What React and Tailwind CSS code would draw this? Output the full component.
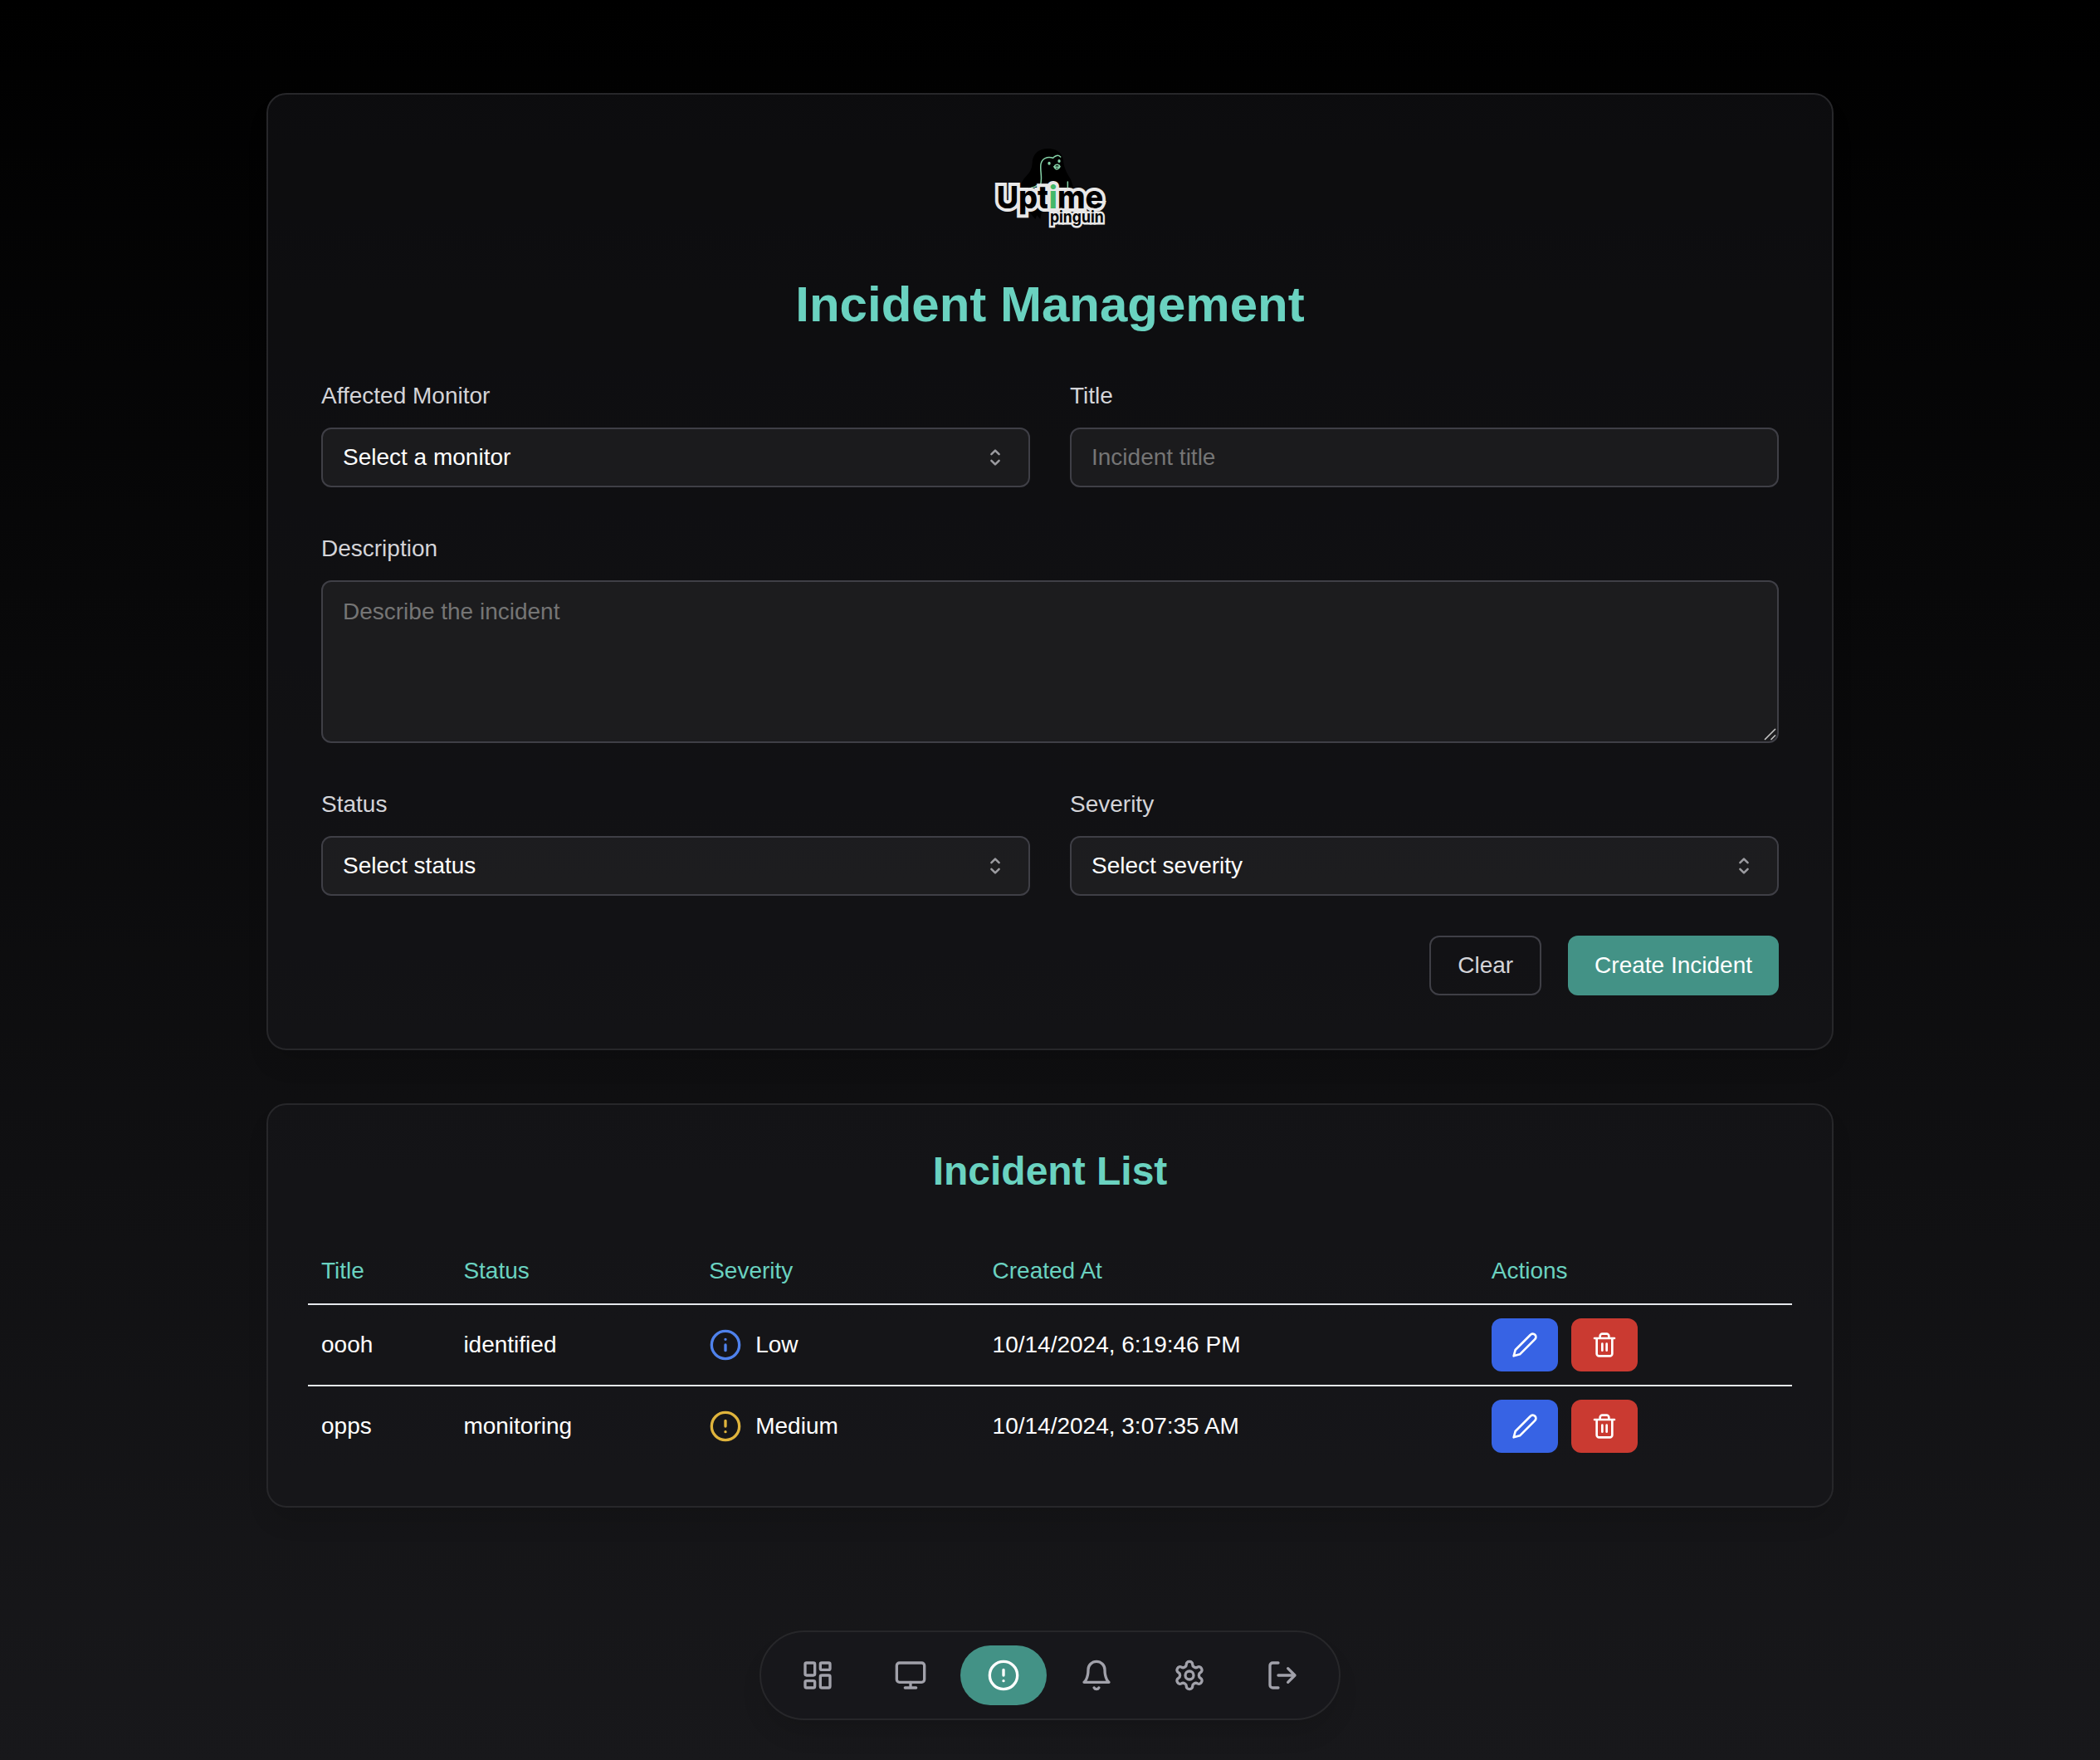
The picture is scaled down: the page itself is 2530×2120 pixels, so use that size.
import React from "react";

const FONT = "font-['Liberation_Sans',Arial,sans-serif]";

function Icon({ className, children }) {
  return (
    <svg
      viewBox="0 0 24 24"
      fill="none"
      stroke="currentColor"
      strokeWidth="2"
      strokeLinecap="round"
      strokeLinejoin="round"
      className={className}
    >
      {children}
    </svg>
  );
}

const icons = {
  dashboard: (
    <>
      <rect width="7" height="9" x="3" y="3" rx="1" />
      <rect width="7" height="5" x="14" y="3" rx="1" />
      <rect width="7" height="9" x="14" y="12" rx="1" />
      <rect width="7" height="5" x="3" y="16" rx="1" />
    </>
  ),
  monitor: (
    <>
      <rect width="20" height="14" x="2" y="3" rx="2" />
      <path d="M8 21h8M12 17v4" />
    </>
  ),
  alert: (
    <>
      <circle cx="12" cy="12" r="10" />
      <path d="M12 8v4M12 16h.01" />
    </>
  ),
  info: (
    <>
      <circle cx="12" cy="12" r="10" />
      <path d="M12 16v-4M12 8h.01" />
    </>
  ),
  bell: (
    <>
      <path d="M6 8a6 6 0 0 1 12 0c0 7 3 9 3 9H3s3-2 3-9" />
      <path d="M10.3 21a1.94 1.94 0 0 0 3.4 0" />
    </>
  ),
  settings: (
    <>
      <path d="M12.22 2h-.44a2 2 0 0 0-2 2v.18a2 2 0 0 1-1 1.73l-.43.25a2 2 0 0 1-2 0l-.15-.08a2 2 0 0 0-2.73.73l-.22.38a2 2 0 0 0 .73 2.73l.15.1a2 2 0 0 1 1 1.72v.51a2 2 0 0 1-1 1.74l-.15.09a2 2 0 0 0-.73 2.73l.22.38a2 2 0 0 0 2.73.73l.15-.08a2 2 0 0 1 2 0l.43.25a2 2 0 0 1 1 1.73V20a2 2 0 0 0 2 2h.44a2 2 0 0 0 2-2v-.18a2 2 0 0 1 1-1.73l.43-.25a2 2 0 0 1 2 0l.15.08a2 2 0 0 0 2.73-.73l.22-.39a2 2 0 0 0-.73-2.73l-.15-.08a2 2 0 0 1-1-1.74v-.5a2 2 0 0 1 1-1.74l.15-.09a2 2 0 0 0 .73-2.73l-.22-.38a2 2 0 0 0-2.73-.73l-.15.08a2 2 0 0 1-2 0l-.43-.25a2 2 0 0 1-1-1.73V4a2 2 0 0 0-2-2z" />
      <circle cx="12" cy="12" r="3" />
    </>
  ),
  logout: (
    <>
      <path d="M9 21H5a2 2 0 0 1-2-2V5a2 2 0 0 1 2-2h4" />
      <path d="m16 17 5-5-5-5M21 12H9" />
    </>
  ),
  pencil: <path d="M17 3a2.85 2.83 0 1 1 4 4L7.5 20.5 2 22l1.5-5.5Z" />,
  trash: (
    <>
      <path d="M3 6h18M19 6v14c0 1-1 2-2 2H7c-1 0-2-1-2-2V6M8 6V4c0-1 1-2 2-2h4c1 0 2 1 2 2v2" />
      <path d="M10 11v6M14 11v6" />
    </>
  ),
};

function Logo() {
  return (
    <svg viewBox="0 54 630 360" className="block w-[210px] h-[120px]">
      <path
        d="M308 57 C272 57 252 78 251 108 C250 132 240 146 226 160 C206 182 204 210 206 230 L245 292 L262 312 L268 298 L280 312 L284 290 L400 230 C402 205 398 185 388 165 C372 140 364 120 363 98 C358 72 338 57 308 57 Z"
        fill="#000"
      />
      <g fill="none" stroke="#86d3a8" strokeWidth="4.5" strokeLinecap="round">
        <path d="M353 87 C344 78 334 82 326 91 C305 84 286 93 282 113 C278 140 290 168 279 192" />
        <path d="M379 177 V200" />
        <path d="M248 199 Q260 196 268 190" />
        <path d="M330 123 Q334 114 342 115 Q350 117 351 122 Q346 132 338 131 Q332 129 330 123 Q340 125 351 122" />
      </g>
      <ellipse cx="312" cy="110" rx="5" ry="6" fill="#86d3a8" />
      <ellipse cx="348" cy="102" rx="5" ry="6" fill="#86d3a8" />
      <g
        fontFamily="Inter, sans-serif"
        stroke="#e8e8e8"
        strokeLinejoin="miter"
        strokeMiterlimit="2"
        paintOrder="stroke"
      >
        <text
          x="122" y="273" fontSize="112" fontWeight="800" fill="#000" strokeWidth="24"
          textLength="386" lengthAdjust="spacingAndGlyphs"
        >
          Upt<tspan fill="#44b868">i</tspan>me
        </text>
        <text
          x="315" y="325" fontSize="57" fontWeight="700" fill="#000" strokeWidth="15"
          textLength="194" lengthAdjust="spacingAndGlyphs"
        >
          pinguin
        </text>
      </g>
    </svg>
  );
}

function Field({ label, className = "", children }) {
  return (
    <div className={className}>
      <div className="mb-[18px] h-10 leading-10 text-zinc-300">{label}</div>
      {children}
    </div>
  );
}

const fieldBox = "w-full rounded-xl border-2 border-[#3f3f46] bg-[#27272a]/50";

function SelectBox({ text }) {
  return (
    <button
      type="button"
      className={`${fieldBox} flex h-[72px] items-center justify-between pl-6 pr-[30px] text-left text-white`}
    >
      <span>{text}</span>
      <svg
        viewBox="0 0 20 24"
        className="h-6 w-5"
        fill="none"
        stroke="#9c9ca1"
        strokeWidth="2.5"
        strokeLinecap="round"
        strokeLinejoin="round"
      >
        <path d="M5.4 8.2 10 3.6l4.6 4.6M5.4 15.8l4.6 4.6 4.6-4.6" />
      </svg>
    </button>
  );
}

const incidents = [
  { title: "oooh", status: "identified", severity: "Low", icon: "info", color: "text-[#4f82ec]", at: "10/14/2024, 6:19:46 PM" },
  { title: "opps", status: "monitoring", severity: "Medium", icon: "alert", color: "text-[#e0b43c]", at: "10/14/2024, 3:07:35 AM" },
];

const navItems = ["dashboard", "monitor", "alert", "bell", "settings", "logout"];

const cols = "grid grid-cols-[171.4px_295.8px_341.4px_601.2px_1fr] items-center [&>*]:px-4";
const card =
  "rounded-3xl border-2 border-[#27272a] bg-[#18181b]/50 shadow-[0_20px_30px_-6px_rgba(0,0,0,0.12)]";

export default function App() {
  return (
    <div
      className={`${FONT} flex h-[2120px] w-[2530px] flex-col items-center overflow-hidden bg-[linear-gradient(to_bottom,#000,#18181b)] pt-28 text-[28px] leading-10 text-white`}
    >
      <section className={`${card} w-[1888px] p-16`}>
        <div className="flex justify-center">
          <Logo />
        </div>
        <h1 className="mt-[33px] mb-[54px] text-center text-[60px] leading-[72px] font-bold text-[#6ad2c0]">
          Incident Management
        </h1>
        <form className="grid grid-cols-2 gap-x-12 gap-y-[54px]">
          <Field label="Affected Monitor">
            <SelectBox text="Select a monitor" />
          </Field>
          <Field label="Title">
            <input
              placeholder="Incident title"
              className={`${fieldBox} block h-[72px] px-6 placeholder:text-[#757575]`}
            />
          </Field>
          <Field label="Description" className="col-span-2">
            <div className="relative">
              <textarea
                placeholder="Describe the incident"
                className={`${fieldBox} block h-[196px] resize-none px-6 py-4 placeholder:text-[#757575]`}
              />
              <svg
                viewBox="0 0 16 16"
                className="absolute right-[2px] bottom-[2px] h-4 w-4"
                fill="none"
                stroke="#c4c4c4"
                strokeWidth="1.6"
              >
                <path d="M1 14 14 1M8.500 14 14 8.500" />
              </svg>
            </div>
          </Field>
          <Field label="Status">
            <SelectBox text="Select status" />
          </Field>
          <Field label="Severity">
            <SelectBox text="Select severity" />
          </Field>
        </form>
        <div className="mt-12 flex justify-end gap-8">
          <button type="button" className="h-[72px] rounded-xl border-2 border-[#3f3f46] px-8 text-zinc-300">
            Clear
          </button>
          <button type="button" className="h-[72px] rounded-xl bg-[#439286] px-8 text-white">
            Create Incident
          </button>
        </div>
      </section>

      <section className={`${card} mt-16 w-[1888px] p-12`}>
        <h2 className="mb-12 text-center text-[48px] leading-[64px] font-bold text-[#6ad2c0]">
          Incident List
        </h2>
        <div className={`${cols} h-[81px] border-b-2 border-[#e5e7eb] text-[#6ad2c0]`}>
          <div>Title</div>
          <div>Status</div>
          <div>Severity</div>
          <div>Created At</div>
          <div>Actions</div>
        </div>
        {incidents.map((row) => (
          <div
            key={row.title}
            className={`${cols} border-b-2 border-[#e5e7eb] py-4 last:border-b-0`}
          >
            <div>{row.title}</div>
            <div>{row.status}</div>
            <div className="flex items-center gap-4">
              <Icon className={`size-10 ${row.color}`}>{icons[row.icon]}</Icon>
              <span>{row.severity}</span>
            </div>
            <div>{row.at}</div>
            <div className="flex gap-4">
              <button type="button" className="flex h-16 w-20 items-center justify-center rounded-xl bg-[#3763e4]">
                <Icon className="size-8">{icons.pencil}</Icon>
              </button>
              <button type="button" className="flex h-16 w-20 items-center justify-center rounded-xl bg-[#ca3a31]">
                <Icon className="size-8">{icons.trash}</Icon>
              </button>
            </div>
          </div>
        ))}
      </section>

      <nav className="mt-auto mb-12 flex gap-2 rounded-full border-2 border-[#27272a] bg-[#18181b]/80 p-4 shadow-[0_20px_30px_-6px_rgba(0,0,0,0.12)]">
        {navItems.map((name) => (
          <button
            key={name}
            type="button"
            className={`rounded-full px-8 py-4 ${name === "alert" ? "bg-[#439286] text-white" : "text-[#a1a1aa]"}`}
          >
            <Icon className="size-10">{icons[name]}</Icon>
          </button>
        ))}
      </nav>
    </div>
  );
}
